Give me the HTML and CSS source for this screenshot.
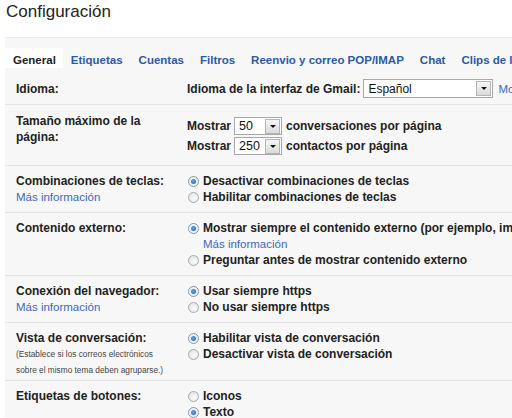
FILE: index.html
```html
<!DOCTYPE html>
<html lang="es">
<head>
  <meta charset="UTF-8" />
  <meta name="viewport" content="width=device-width, initial-scale=1.0"/>
  <title>Configuración</title>
  <link rel="stylesheet" href="styles.css">
</head>
<body>

<h1 class="title">Configuración</h1>

<div class="panel">
  <div class="tabs">
    <span class="tab tab-active">General</span>
    <a class="tab" href="#">Etiquetas</a>
    <a class="tab" href="#">Cuentas</a>
    <a class="tab" href="#">Filtros</a>
    <a class="tab" href="#">Reenvio y correo POP/IMAP</a>
    <a class="tab" href="#">Chat</a>
    <a class="tab" href="#">Clips de la web</a>
  </div>

  <div class="row row-lang">
    <div class="label">Idioma:</div>
    <div class="value inline">
      <span>Idioma de la interfaz de Gmail:</span>
      <span class="select sel-lang"><span class="sel-text">Español</span><span class="sel-btn"></span></span>
      <a class="link" href="#">Mostrar todas las opciones de idioma</a>
    </div>
  </div>

  <div class="row row-size">
    <div class="label">Tamaño máximo de la<br>página:</div>
    <div class="value">
      <div class="line">
        <span>Mostrar</span>
        <span class="select sel-num"><span class="sel-text">50</span><span class="sel-btn"></span></span>
        <span>conversaciones por página</span>
      </div>
      <div class="line">
        <span>Mostrar</span>
        <span class="select sel-num"><span class="sel-text">250</span><span class="sel-btn"></span></span>
        <span>contactos por página</span>
      </div>
    </div>
  </div>

  <div class="row">
    <div class="label">Combinaciones de teclas:<br><a class="link" href="#">Más información</a></div>
    <div class="value">
      <div class="opt"><span class="radio on"></span>Desactivar combinaciones de teclas</div>
      <div class="opt"><span class="radio"></span>Habilitar combinaciones de teclas</div>
    </div>
  </div>

  <div class="row">
    <div class="label">Contenido externo:</div>
    <div class="value">
      <div class="opt"><span class="radio on"></span>Mostrar siempre el contenido externo (por ejemplo, imágenes) enviado por remitentes de confianza</div>
      <div class="opt-sub"><a class="link" href="#">Más información</a></div>
      <div class="opt"><span class="radio"></span>Preguntar antes de mostrar contenido externo</div>
    </div>
  </div>

  <div class="row">
    <div class="label">Conexión del navegador:<br><a class="link" href="#">Más información</a></div>
    <div class="value">
      <div class="opt"><span class="radio on"></span>Usar siempre https</div>
      <div class="opt"><span class="radio"></span>No usar siempre https</div>
    </div>
  </div>

  <div class="row row-thread">
    <div class="label">Vista de conversación:
      <div class="note">(Establece si los correos electrónicos<br>sobre el mismo tema deben agruparse.)</div>
    </div>
    <div class="value">
      <div class="opt"><span class="radio on"></span>Habilitar vista de conversación</div>
      <div class="opt"><span class="radio"></span>Desactivar vista de conversación</div>
    </div>
  </div>

  <div class="row">
    <div class="label">Etiquetas de botones:</div>
    <div class="value">
      <div class="opt"><span class="radio"></span>Iconos</div>
      <div class="opt"><span class="radio on"></span>Texto</div>
    </div>
  </div>
</div>

</body>
</html>
```

FILE: styles.css
```css
body {
  font-family: "Liberation Sans", Arial, sans-serif;
  background: #fff;
  color: #222;
  margin: 0;
  overflow: hidden;
  white-space: nowrap;
}
.title {
  font-size: 17px;
  font-weight: normal;
  line-height: 20px;
  margin: 0 0 15px 6px;
  padding-top: 2px;
  color: #222;
}
.panel {
  margin-left: 5px;
  width: 620px;
  background: #f7f7f7;
  border-top: 1px solid #ebebeb;
  padding-top: 10px;
}
.tabs {
  display: flex;
  height: 20px;
}
.tab {
  font-size: 11.5px;
  font-weight: bold;
  line-height: 16px;
  padding: 4px 8px 0;
  color: #2a5aa8;
  text-decoration: none;
}
.tab-active {
  background: #fff;
  color: #222;
  padding: 4px 7px 0 8px;
}
.row {
  display: grid;
  grid-template-columns: 171px auto;
  padding: 7px 0 7px 11px;
  border-top: 1px solid #e3e3e3;
  font-size: 12px;
  font-weight: bold;
  line-height: 16px;
}
.row-lang {
  border-top: none;
  padding: 11px 0 6px 11px;
  align-items: center;
}
.row-size {
  padding: 8px 0 9px 11px;
}
.row-size .value {
  padding-top: 3px;
}
.row-thread {
  padding-bottom: 2px;
}
.link {
  color: #3a68c0;
  font-weight: normal;
  font-size: 11.5px;
  text-decoration: none;
}
.inline {
  display: flex;
  align-items: center;
  gap: 3px;
}
.inline .link {
  margin-left: 2px;
}
.line {
  display: flex;
  align-items: center;
  gap: 3px;
  height: 20px;
}
.line .select {
  margin-right: 1px;
}
.select {
  display: inline-flex;
  align-items: center;
  box-sizing: border-box;
  border: 1px solid #a8a8a8;
  background: #fff;
  font-weight: normal;
  color: #111;
}
.sel-lang {
  width: 130px;
  height: 19px;
}
.sel-num {
  width: 48px;
  height: 18px;
  font-size: 12.5px;
}
.sel-text {
  flex: 1;
  padding-left: 4px;
}
.sel-btn {
  display: flex;
  align-items: center;
  justify-content: center;
  box-sizing: border-box;
  width: 15px;
  height: 15px;
  margin-right: 1px;
  border: 1px solid #b4b4b4;
  background: linear-gradient(#f6f6f6, #dadada);
}
.sel-btn::after {
  content: '';
  border-left: 3px solid transparent;
  border-right: 3px solid transparent;
  border-top: 3px solid #111;
}
.opt {
  display: flex;
  align-items: center;
  gap: 4px;
  height: 16px;
}
.opt-sub {
  padding-left: 16px;
  height: 16px;
}
.radio {
  display: inline-flex;
  align-items: center;
  justify-content: center;
  box-sizing: border-box;
  width: 11px;
  height: 11px;
  margin-left: 1px;
  border-radius: 50%;
  border: 1px solid #a3abb3;
  background: radial-gradient(circle at 60% 60%, #fafafa, #dedede);
}
.radio.on {
  border-color: #8397ac;
  background: #eef3f8;
}
.radio.on::after {
  content: '';
  width: 5px;
  height: 5px;
  border-radius: 50%;
  background: radial-gradient(circle at 40% 40%, #6aa0de, #1f5fae);
}
.note {
  font-size: 8.3px;
  font-weight: normal;
  color: #444;
  line-height: 16px;
}
```
